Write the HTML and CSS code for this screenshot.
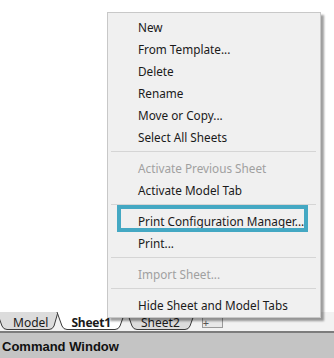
FILE: index.html
```html
<!DOCTYPE html>
<html>
<head>
<meta charset="utf-8">
<link rel="stylesheet" href="styles.css">
</head>
<body>
<div class="app">
  <div class="workspace">
    <ul class="menu">
      <li class="item">New</li>
      <li class="item">From Template...</li>
      <li class="item">Delete</li>
      <li class="item">Rename</li>
      <li class="item">Move or Copy...</li>
      <li class="item">Select All Sheets</li>
      <li class="sep"></li>
      <li class="item disabled">Activate Previous Sheet</li>
      <li class="item">Activate Model Tab</li>
      <li class="sep"></li>
      <li class="item highlighted">Print Configuration Manager...</li>
      <li class="item">Print...</li>
      <li class="sep"></li>
      <li class="item disabled">Import Sheet...</li>
      <li class="sep"></li>
      <li class="item">Hide Sheet and Model Tabs</li>
    </ul>
  </div>
  <div class="tabstrip">
    <svg class="tabshapes" width="334" height="19" viewBox="0 0 334 19">
      <path d="M-3 0 L2 14 Q3.5 17.5 7 17.5 L49 17.5 Q52.5 17.5 54 14 L58 0 Z" fill="#dcdcdc"/>
      <path d="M-3 0 L2 14 Q3.5 17.5 7 17.5 L49 17.5 Q52.5 17.5 54 14 L58 0" fill="none" stroke="#3a3a3a" stroke-width="1"/>
      <path d="M127 0 L132 14 Q133.5 17.5 137 17.5 L185 17.5 Q188.5 17.5 190 14 L195 0 Z" fill="#dcdcdc"/>
      <path d="M127 0 L132 14 Q133.5 17.5 137 17.5 L185 17.5 Q188.5 17.5 190 14 L195 0" fill="none" stroke="#3a3a3a" stroke-width="1"/>
      <path d="M57 0 L62 14 Q63.5 17.5 67 17.5 L115 17.5 Q118.5 17.5 120 14 L125 0 Z" fill="#ffffff"/>
      <path d="M57 0 L62 14 Q63.5 17.5 67 17.5 L115 17.5 Q118.5 17.5 120 14 L125 0" fill="none" stroke="#3a3a3a" stroke-width="1"/>
      <rect x="202.5" y="5.5" width="20" height="10" fill="#e8e8e8" stroke="#9a9a9a"/>
    </svg>
    <span class="tab tab-model">Model</span>
    <span class="tab tab-active">Sheet1</span>
    <span class="tab tab-sheet2">Sheet2</span>
    <span class="tab tab-plus">+</span>
  </div>
  <div class="cmdbar">Command Window</div>
</div>
</body>
</html>
```
FILE: styles.css
```css
html, body {
  margin: 0;
  padding: 0;
  background: #ffffff;
}
body {
  font-family: "Noto Sans", "Open Sans", sans-serif;
  color: #1a1a1a;
}
.app {
  display: flex;
  flex-direction: column;
  width: 334px;
  height: 358px;
  overflow: hidden;
}
.workspace {
  position: relative;
  height: 312px;
  background: #ffffff;
}
.menu {
  position: absolute;
  left: 107px;
  top: 12px;
  width: 214px;
  box-sizing: border-box;
  margin: 0;
  padding: 2px 0;
  list-style: none;
  background: #f0f0f0;
  border: 1px solid #c8c8c8;
  box-shadow: 3px 3px 2px rgba(0, 0, 0, 0.38);
  z-index: 10;
  font-size: 11.75px;
}
.item {
  position: relative;
  height: 21px;
  padding-top: 1px;
  line-height: 22px;
  padding-left: 30px;
  white-space: nowrap;
}
.item.disabled {
  color: #a0a0a0;
}
.item.highlighted::after {
  content: "";
  position: absolute;
  left: 9px;
  right: 12px;
  top: -4px;
  bottom: -1px;
  border: 4px solid #44a8c3;
}
.sep {
  height: 9px;
  position: relative;
}
.sep::before {
  content: "";
  position: absolute;
  left: 3px;
  right: 4px;
  top: 4px;
  height: 1px;
  background: #d5d5d5;
}
.tabstrip {
  position: relative;
  height: 19px;
  background: #f2f2f2;
  display: flex;
  align-items: center;
  font-size: 12px;
}
.tabshapes {
  position: absolute;
  left: 0;
  top: 0;
}
.tab {
  position: relative;
  line-height: 19px;
  height: 19px;
  margin-top: 1px;
}
.tab-model {
  margin-left: 13px;
}
.tab-active {
  margin-left: 23px;
  font-weight: bold;
  letter-spacing: -0.2px;
}
.tab-sheet2 {
  margin-left: 30px;
}
.tab-plus {
  margin-left: 23px;
  font-size: 11px;
  color: #555;
}
.cmdbar {
  flex: 1;
  border-top: 2px solid #7c7c7c;
  background: #c4c4c4;
  font-family: "Liberation Sans", Arial, sans-serif;
  font-weight: bold;
  font-size: 13px;
  padding-left: 2px;
  padding-top: 2px;
  display: flex;
  align-items: center;
  color: #111;
}
```
